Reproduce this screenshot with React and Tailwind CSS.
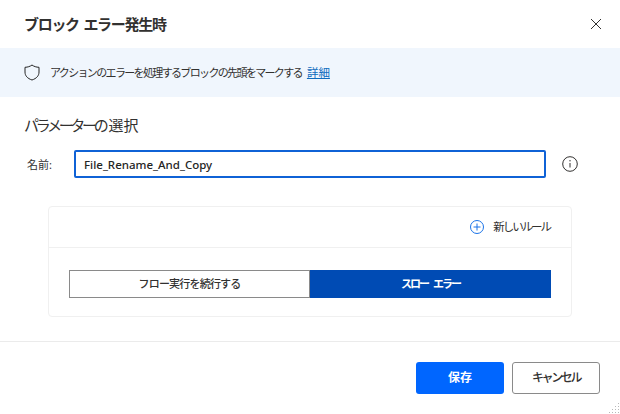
import React from "react";

export default function App() {
  return (
    <div className="relative flex h-[414px] w-[620px] flex-col overflow-hidden bg-white text-[#242424] font-['Noto_Sans','Noto_Sans_CJK_JP',sans-serif]">
      <div className="flex h-12 items-center justify-between pl-6 pr-[18px]">
        <h1 className="text-[15px] font-semibold tracking-[-1.3px] [word-spacing:2px] text-[#323130]">ブロック エラー発生時</h1>
        <svg width="12" height="12" viewBox="0 0 12 12" className="text-[#323130]">
          <path d="M1 1l10 10M11 1L1 11" stroke="currentColor" strokeWidth="1" fill="none" />
        </svg>
      </div>

      <div className="flex h-[49px] items-center bg-[#f0f6fd] pl-6">
        <svg width="16" height="17" viewBox="0 0 16 17" fill="none" className="text-[#242424]">
          <path d="M8 1c2 1.500 4.300 2.200 7 2.300v4.700c0 3.700-2.300 6.400-7 8-4.700-1.600-7-4.300-7-8V3.300C3.700 3.200 6 2.500 8 1z" stroke="currentColor" strokeWidth="1" />
        </svg>
        <p className="ml-[10px] flex items-baseline text-[11px] tracking-[-1.65px] text-[#323130]">
          <span>アクションのエラーを処理するブロックの先頭をマークする</span>
          <a className="ml-[5px] text-[11.500px] tracking-normal text-[#0f6cbd] underline">詳細</a>
        </p>
      </div>

      <h2 className="ml-6 mt-[16px] h-6 text-[15px] leading-6 text-[#323130]">
        <span className="tracking-[-3.300px]">パラメーターの</span>
        <span className="ml-[3px] tracking-normal">選択</span>
      </h2>

      <div className="mt-[13px] flex h-7 items-center pl-[27px]">
        <label className="w-[47px] pt-[2px] text-[11px] text-[#323130]">名前:</label>
        <div className="flex h-7 w-[472px] items-center rounded-[2px] border-2 border-[#0f62d6] pl-2 pt-[2px] text-[11.500px] font-medium text-[#242424]">
          File_Rename_And_Copy
        </div>
        <svg width="16" height="16" viewBox="0 0 16 16" fill="none" className="ml-4 text-[#323130]">
          <circle cx="8" cy="8" r="7.300" stroke="currentColor" strokeWidth="1" />
          <path d="M8 7v4.500" stroke="currentColor" strokeWidth="1" />
          <circle cx="8" cy="4.800" r=".7" fill="currentColor" />
        </svg>
      </div>

      <div className="ml-12 mt-7 h-[111px] w-[524px] rounded-[4px] border border-[#f0f0f0]">
        <div className="flex h-[41px] items-center justify-end border-b border-[#f0f0f0] pr-[21px]">
          <svg width="16" height="16" viewBox="0 0 16 16" fill="none" className="text-[#1a73e8]">
            <circle cx="8" cy="8" r="6.500" stroke="currentColor" strokeWidth="1" />
            <path d="M8 4.500v7M4.500 8h7" stroke="currentColor" strokeWidth="1" />
          </svg>
          <span className="ml-2 text-[11.500px] tracking-[-2.050px] text-[#323130]">新しいルール</span>
        </div>
        <div className="mx-5 mt-[22px] flex h-7">
          <div className="flex w-[241px] items-center justify-center border border-[#8a8a8a] text-[11px] font-medium tracking-[-0.8px] text-[#323130]">
            フロー実行を続行する
          </div>
          <div className="flex w-[241px] items-center justify-center bg-[#004bb4] text-[11px] font-bold tracking-[-2px] [word-spacing:4px] text-white">
            スロー エラー
          </div>
        </div>
      </div>

      <div className="mt-6 flex flex-1 justify-end gap-2 border-t border-[#ebebeb] pr-5 pt-5">
        <button className="h-8 w-[88px] rounded-[3px] bg-[#0066ff] text-[12px] font-bold text-white">保存</button>
        <button className="h-8 w-[88px] rounded-[3px] border border-[#8a8a8a] text-[12px] font-medium tracking-[-2.400px] text-[#323130]">キャンセル</button>
      </div>

      <svg width="12" height="12" viewBox="0 0 12 12" className="absolute bottom-0 right-0 text-[#b8b8b8]" fill="currentColor">
        <rect x="10" y="1" width="1" height="1" /><rect x="10" y="4" width="1" height="1" /><rect x="10" y="7" width="1" height="1" /><rect x="10" y="10" width="1" height="1" />
        <rect x="7" y="4" width="1" height="1" /><rect x="7" y="7" width="1" height="1" /><rect x="7" y="10" width="1" height="1" />
        <rect x="4" y="7" width="1" height="1" /><rect x="4" y="10" width="1" height="1" />
        <rect x="1" y="10" width="1" height="1" />
      </svg>
    </div>
  );
}
